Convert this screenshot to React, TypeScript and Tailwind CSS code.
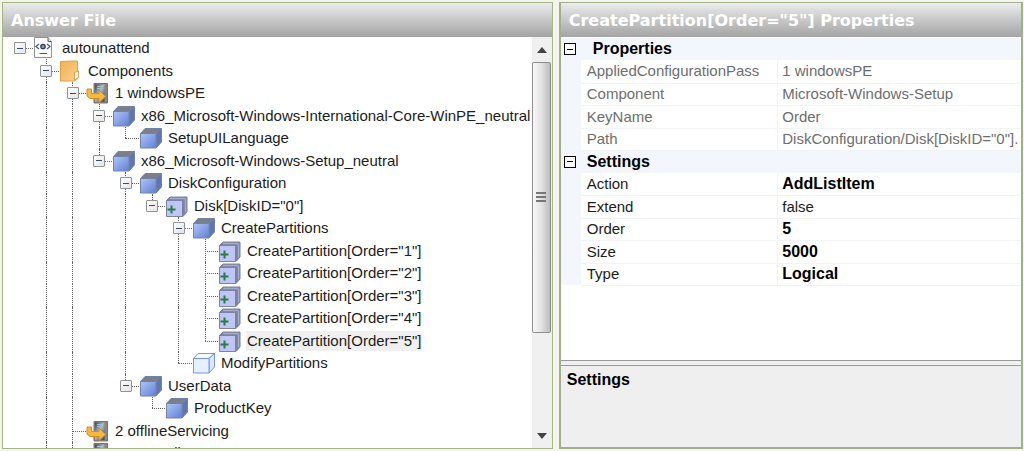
import React from "react";

type IconKind = "file" | "folder" | "pass" | "cube" | "list" | "empty";

type TreeRow = {
  label: string;
  level: number;
  icon: IconKind;
  open?: boolean;
  /** levels whose dotted guide runs through the full height of the row */
  guides: number[];
  last?: boolean;
  selected?: boolean;
};

const rows: TreeRow[] = [
  { label: "autounattend", level: 0, icon: "file", open: true, guides: [] },
  { label: "Components", level: 1, icon: "folder", open: true, guides: [1] },
  { label: "1 windowsPE", level: 2, icon: "pass", open: true, guides: [1, 2] },
  { label: "x86_Microsoft-Windows-International-Core-WinPE_neutral", level: 3, icon: "cube", open: true, guides: [1, 2, 3] },
  { label: "SetupUILanguage", level: 4, icon: "cube", guides: [1, 2, 3], last: true },
  { label: "x86_Microsoft-Windows-Setup_neutral", level: 3, icon: "cube", open: true, guides: [1, 2], last: true },
  { label: "DiskConfiguration", level: 4, icon: "cube", open: true, guides: [1, 2, 4] },
  { label: 'Disk[DiskID="0"]', level: 5, icon: "list", open: true, guides: [1, 2, 4], last: true },
  { label: "CreatePartitions", level: 6, icon: "cube", open: true, guides: [1, 2, 4, 6] },
  { label: 'CreatePartition[Order="1"]', level: 7, icon: "list", guides: [1, 2, 4, 6, 7] },
  { label: 'CreatePartition[Order="2"]', level: 7, icon: "list", guides: [1, 2, 4, 6, 7] },
  { label: 'CreatePartition[Order="3"]', level: 7, icon: "list", guides: [1, 2, 4, 6, 7] },
  { label: 'CreatePartition[Order="4"]', level: 7, icon: "list", guides: [1, 2, 4, 6, 7] },
  { label: 'CreatePartition[Order="5"]', level: 7, icon: "list", guides: [1, 2, 4, 6], last: true, selected: true },
  { label: "ModifyPartitions", level: 6, icon: "empty", guides: [1, 2, 4], last: true },
  { label: "UserData", level: 4, icon: "cube", open: true, guides: [1, 2], last: true },
  { label: "ProductKey", level: 5, icon: "cube", guides: [1, 2], last: true },
  { label: "2 offlineServicing", level: 2, icon: "pass", guides: [1, 2] },
  { label: "3 generalize", level: 2, icon: "pass", guides: [1, 2] },
];

function Cube({ front, top, side, edge }: { front: string; top: string; side: string; edge: string }) {
  return (
    <g stroke={edge} strokeWidth="1" strokeLinejoin="round">
      <path d="M1.500 6.500 6 1.500h16.500l-5.500 5z" fill={top} />
      <path d="M17 6.500 22.500 1.500V15L17 21z" fill={side} />
      <path d="M1.500 6.500H17V21H1.500z" fill={front} />
    </g>
  );
}

function NodeIcon({ kind }: { kind: IconKind }) {
  return (
    <svg viewBox="0 0 23 22" className="h-[22px] w-[23px] shrink-0" aria-hidden="true">
      <defs>
        <linearGradient id="cubeFront" x1="0" y1="0" x2="1" y2="1">
          <stop offset="0" stopColor="#b0c6f8" />
          <stop offset="1" stopColor="#6080d6" />
        </linearGradient>
        <linearGradient id="folderFront" x1="0" y1="0" x2="1" y2="1">
          <stop offset="0" stopColor="#f0b158" />
          <stop offset="1" stopColor="#f9cf8a" />
        </linearGradient>
        <linearGradient id="towerFront" x1="0" y1="0" x2="1" y2="1">
          <stop offset="0" stopColor="#36414c" />
          <stop offset="0.45" stopColor="#a6bccb" />
          <stop offset="1" stopColor="#3c4650" />
        </linearGradient>
      </defs>
      {kind === "cube" && <Cube front="url(#cubeFront)" top="#7b7f89" side="#6076ae" edge="#7482a8" />}
      {kind === "empty" && <Cube front="#e6f0ff" top="#f6faff" side="#dce8ff" edge="#7494ea" />}
      {kind === "list" && (
        <>
          <path d="M1.500 5.500 5 2h17v15l-4 4.500z" fill="#7b819c" stroke="#7c829c" />
          <path d="M5 3.500h15M20.500 3.500v14" stroke="#a4aace" strokeWidth="1.500" />
          <path d="M1.500 5.500h16v16h-16z" fill="#bfc6f5" stroke="#7c83a2" />
          <path d="M6.500 10.500v8M2.500 14.500h8" stroke="#2c7a48" strokeWidth="2" />
        </>
      )}
      {kind === "file" && (
        <>
          <path d="M1.500 .5H15l3.500 4V20.500h-17z" fill="#fdfdfe" stroke="#8d939b" />
          <path d="M15 .5v4h3.500" fill="#d7dce2" stroke="#565c66" />
          <path d="m6 7-3 2.500L6 12M14 7l3 2.500-3 2.500" fill="none" stroke="#4d5f7c" strokeWidth="1.300" />
          <circle cx="10" cy="9.500" r="2.200" fill="#8799b5" stroke="#30405c" strokeWidth="1.300" />
          <path d="M6.500 16.500H14" stroke="#555" />
        </>
      )}
      {kind === "folder" && (
        <>
          <path d="M1.500 1.500 13 1h5.500v18l-3 2h-14z" fill="url(#folderFront)" stroke="#dfa04a" />
          <path d="M15.500 12.500 19.500 11v6.500l-4 2.500z" fill="#fff4dc" stroke="#d9a356" />
        </>
      )}
      {kind === "pass" && (
        <>
          <path d="M8 1.500h13.500V21H8z" fill="#8f867d" stroke="#77716c" />
          <path d="M9 2.500h9.500V20H9z" fill="url(#towerFront)" />
          <path d="M11 4.500h6M11 6.500h6" stroke="#a9bdca" />
          <path d="M1 7h4.500v4.500H13V8l6.500 6.500-6.500 6v-4H4L1 14z" fill="#f8b840" stroke="#d28c28" />
        </>
      )}
    </svg>
  );
}

function LevelCell({ level, row }: { level: number; row: TreeRow }) {
  const own = level === row.level;
  const full = row.guides.includes(level) && level > 0;
  const half = own && row.last;
  return (
    <span className="relative flex h-full w-[27px] shrink-0 items-center justify-center even:w-[26px]">
      {full && <span className="absolute inset-y-0 left-[13px] border-l border-dotted border-[#666]" />}
      {half && <span className="absolute top-0 left-[13px] h-1/2 border-l border-dotted border-[#666]" />}
      {own && <span className="absolute top-1/2 right-0 left-[13px] border-t border-dotted border-[#666]" />}
      {own && row.open && (
        <button
          type="button"
          aria-label={`Collapse ${row.label}`}
          className="relative flex size-3 items-center justify-center rounded-[1px] border border-[#8e939c] bg-linear-to-br from-white to-[#e4e4e4]"
        >
          <span className="h-px w-1.5 bg-[#35497c]" />
        </button>
      )}
    </span>
  );
}

function Tree() {
  return (
    <ul role="tree" aria-label="Answer File" className="min-w-0 flex-1 overflow-hidden bg-white pl-[3px]">
      {rows.map((row) => (
        <li
          key={row.label}
          role="treeitem"
          aria-selected={!!row.selected}
          className="flex h-[22px] items-center even:h-[23px]"
        >
          {Array.from({ length: row.level + 1 }, (_, level) => (
            <LevelCell key={level} level={level} row={row} />
          ))}
          <span className="flex w-7 shrink-0 items-center">
            <NodeIcon kind={row.icon} />
          </span>
          <span className={row.selected ? "bg-[#f0f0f0] px-px whitespace-nowrap" : "px-px whitespace-nowrap"}>
            {row.label}
          </span>
        </li>
      ))}
    </ul>
  );
}

function ScrollBar() {
  return (
    <div className="flex w-5 shrink-0 flex-col bg-[#f0f0f0]">
      <button type="button" aria-label="Scroll up" className="flex h-[25px] items-center justify-center">
        <svg viewBox="0 0 10 6" className="h-1.5 w-2.5" aria-hidden="true">
          <path d="M5 0l5 6H0z" fill="#444" />
        </svg>
      </button>
      <div className="min-h-0 flex-1">
        <div className="mr-px flex h-3/4 flex-col items-center justify-center gap-0.5 rounded-xs border border-[#8e8e8e] bg-linear-to-r from-[#f8f8f8] via-[#e2e2e2] to-[#bcbcc0]">
          <span className="h-0.5 w-2.5 bg-[#777]" />
          <span className="h-0.5 w-2.5 bg-[#777]" />
          <span className="h-0.5 w-2.5 bg-[#777]" />
        </div>
      </div>
      <button type="button" aria-label="Scroll down" className="flex h-[25px] items-center justify-center">
        <svg viewBox="0 0 10 6" className="h-1.5 w-2.5" aria-hidden="true">
          <path d="M0 0h10L5 6z" fill="#444" />
        </svg>
      </button>
    </div>
  );
}

type Property = { name: string; value: string; bold?: boolean };

const groups: { title: string; readOnly: boolean; items: Property[] }[] = [
  {
    title: "Properties",
    readOnly: true,
    items: [
      { name: "AppliedConfigurationPass", value: "1 windowsPE" },
      { name: "Component", value: "Microsoft-Windows-Setup" },
      { name: "KeyName", value: "Order" },
      { name: "Path", value: 'DiskConfiguration/Disk[DiskID="0"].' },
    ],
  },
  {
    title: "Settings",
    readOnly: false,
    items: [
      { name: "Action", value: "AddListItem", bold: true },
      { name: "Extend", value: "false" },
      { name: "Order", value: "5", bold: true },
      { name: "Size", value: "5000", bold: true },
      { name: "Type", value: "Logical", bold: true },
    ],
  },
];

function PropertyGrid() {
  return (
    <table className="w-full table-fixed border-collapse text-left">
      <colgroup>
        <col className="w-5" />
        <col className="w-[197px]" />
        <col />
      </colgroup>
      <tbody>
        {groups.flatMap((group) => [
          <tr key={group.title} className="h-[22px] bg-[#f3f6fc] even:h-[23px]">
            <td className="p-0">
              <button
                type="button"
                aria-label={`Collapse ${group.title}`}
                className="ml-[3px] flex size-3 items-center justify-center border border-black bg-white"
              >
                <span className="h-px w-1.5 bg-black" />
              </button>
            </td>
            <th
              colSpan={2}
              className={
                group.readOnly
                  ? "py-0 pl-3 text-base leading-5 font-bold text-black"
                  : "py-0 pl-1.5 text-base leading-5 font-bold text-black"
              }
            >
              {group.title}
            </th>
          </tr>,
          ...group.items.map((item) => (
            <tr key={`${group.title}-${item.name}`} className="h-[22px] even:h-[23px]">
              <td className="bg-[#f3f6fc] p-0" />
              <th
                scope="row"
                className={
                  group.readOnly
                    ? "border-r border-b border-[#f1f3f7] py-0 pl-1.5 font-normal text-[#6e6e6e]"
                    : "border-r border-b border-[#f1f3f7] py-0 pl-1.5 font-normal"
                }
              >
                {item.name}
              </th>
              <td
                className={
                  group.readOnly
                    ? "border-b border-[#f1f3f7] py-0 pl-1 whitespace-nowrap text-[#6e6e6e]"
                    : item.bold
                      ? "border-b border-[#f1f3f7] py-0 pl-1 text-base leading-5 font-bold text-black"
                      : "border-b border-[#f1f3f7] py-0 pl-1"
                }
              >
                {item.value}
              </td>
            </tr>
          )),
        ])}
      </tbody>
    </table>
  );
}

function PanelTitle({ children }: { children: React.ReactNode }) {
  return (
    <h2 className="flex h-[34px] shrink-0 items-center overflow-hidden bg-linear-to-b from-[#ececec] to-[#a4a4a4] px-2 pt-0.5 font-['DejaVu_Sans',sans-serif] text-base font-bold whitespace-nowrap text-white">
      {children}
    </h2>
  );
}

export default function App() {
  return (
    <main className="flex h-screen gap-1.5 overflow-hidden bg-[#f4f6ec] pt-0.5 pr-px pb-0.5 pl-0.5 font-['Liberation_Sans',Arial,sans-serif] text-[15px] leading-5 text-[#1c1c1c]">
      <section className="flex min-w-0 flex-[552] flex-col border border-[#a5b585]">
        <PanelTitle>Answer File</PanelTitle>
        <div className="flex min-h-0 flex-1">
          <Tree />
          <ScrollBar />
        </div>
      </section>
      <section className="flex min-w-0 flex-[463] flex-col border-2 border-t border-[#a3ae8c] bg-[#f0f0f0]">
        <PanelTitle>CreatePartition[Order="5"] Properties</PanelTitle>
        <div className="min-h-0 flex-1 overflow-hidden border-b border-[#999] bg-white pt-px">
          <PropertyGrid />
        </div>
        <div className="mt-1 h-[82px] shrink-0 border-t border-[#999] bg-[#efefef] px-1.5 py-1">
          <h3 className="text-base leading-5 font-bold text-black">Settings</h3>
        </div>
      </section>
    </main>
  );
}
